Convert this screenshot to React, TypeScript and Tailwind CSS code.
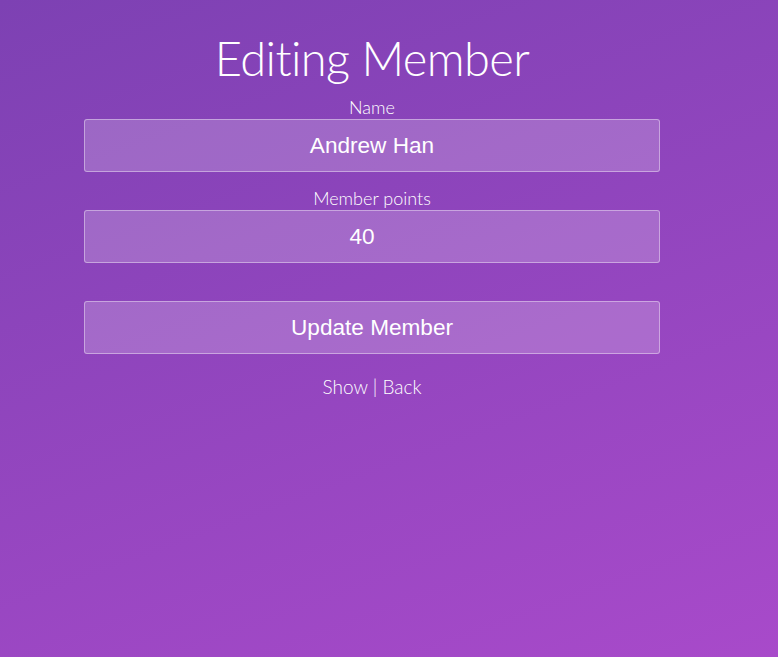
import React from "react";

export default function App() {
  const inputCls =
    "w-full h-[53px] rounded-[3px] border border-white/40 bg-white/20 text-center text-[22.6px] text-white outline-none font-['Liberation_Sans',Arial,sans-serif] font-normal";
  return (
    <div className="min-h-[657px] w-full bg-[linear-gradient(160deg,#7d41b3_0%,#a84aca_100%)] font-['Lato',sans-serif] font-light text-white">
      <div className="ml-[84px] w-[576px] flex flex-col items-center pt-[28px]">
        <h1 className="text-[47px] leading-[60px] font-light tracking-[-0.6px]">Editing Member</h1>
        <label className="mt-[8px] text-[18px] leading-[22px]">Name</label>
        <input className={inputCls + " mt-[1px]"} defaultValue="Andrew Han" />
        <label className="mt-[15px] text-[18px] leading-[22px]">Member points</label>
        <input className={inputCls + " mt-[1px] pr-[20px]"} defaultValue="40" />
        <button className={inputCls + " mt-[38px]"}>Update Member</button>
        <div className="mt-[21px] text-[19px] leading-[24px]">
          <a>Show</a> | <a>Back</a>
        </div>
      </div>
    </div>
  );
}
